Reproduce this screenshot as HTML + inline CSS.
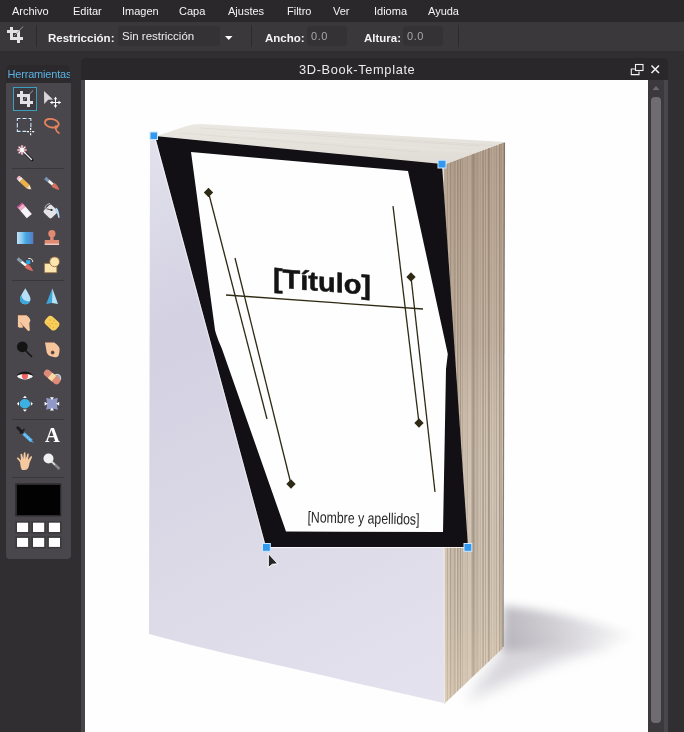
<!DOCTYPE html>
<html><head><meta charset="utf-8">
<style>
*{margin:0;padding:0;box-sizing:border-box}
html,body{width:684px;height:732px;overflow:hidden;background:#302e31;font-family:"Liberation Sans",sans-serif}
.abs{position:absolute;will-change:transform}
#menu{left:0;top:0;width:684px;height:22px;background:#2a282b;will-change:transform}
#menu span{position:absolute;top:5px;font-size:11px;color:#f4f4f4}
#tb{left:0;top:22px;width:684px;height:29px;background:#3a383b}
.lbl{position:absolute;font-size:11.5px;font-weight:bold;color:#f4f4f4}
.inp{position:absolute;background:#343235;border-radius:3px}
.val{position:absolute;font-size:11px;letter-spacing:0.6px;color:#a8a8a8}
.div{position:absolute;width:1px;background:#2c2a2d}
#panel{left:6px;top:83px;width:65px;height:476px;background:#49474b;border-radius:0 0 4px 4px}
#pgap{left:6px;top:78px;width:65px;height:5px;background:#2c2a2d}
#phead{left:6px;top:65px;width:64px;height:14px;background:#2b292c;border-radius:5px 5px 0 0;overflow:hidden}
#win{left:81px;top:58px;width:587px;height:674px;background:#29272a;border-radius:5px 5px 0 0}
#canvas{left:85px;top:80px;width:563px;height:652px;background:#fefefe;overflow:hidden}
#sb{left:648px;top:80px;width:16px;height:652px;background:#3b393c}
#sb2{left:664px;top:80px;width:4px;height:652px;background:#48464a}
#leftstrip{left:81px;top:80px;width:4px;height:652px;background:#48464a}
</style></head><body>
<div id="menu" class="abs">
<span style="left:12px">Archivo</span>
<span style="left:73px">Editar</span>
<span style="left:122px">Imagen</span>
<span style="left:179px">Capa</span>
<span style="left:228px">Ajustes</span>
<span style="left:287px">Filtro</span>
<span style="left:333px">Ver</span>
<span style="left:374px">Idioma</span>
<span style="left:428px">Ayuda</span>
</div>
<div id="tb" class="abs">
<div class="div" style="left:36px;top:3px;height:22px"></div>
<span class="lbl" style="left:48px;top:10px">Restricción:</span>
<div class="inp" style="left:118px;top:4px;width:102px;height:20px"></div>
<span class="val" style="left:122px;top:8px;color:#eeeeee;font-size:11.5px;letter-spacing:0">Sin restricción</span>
<div class="div" style="left:251px;top:3px;height:22px"></div>
<span class="lbl" style="left:265px;top:10px">Ancho:</span>
<div class="inp" style="left:307px;top:4px;width:40px;height:20px"></div>
<span class="val" style="left:311px;top:8px">0.0</span>
<span class="lbl" style="left:364px;top:10px">Altura:</span>
<div class="inp" style="left:403px;top:4px;width:40px;height:20px"></div>
<span class="val" style="left:407px;top:8px">0.0</span>
<div class="div" style="left:458px;top:3px;height:22px"></div>
<svg class="abs" style="left:0;top:0" width="260" height="28" viewBox="0 22 260 28">
<g fill="#e2e1e4">
<rect x="10" y="27" width="3" height="13"/>
<rect x="7" y="30" width="13" height="3"/>
<rect x="17" y="30" width="3" height="13"/>
<rect x="10" y="37" width="13" height="3"/>
</g>
<line x1="14" y1="36" x2="23" y2="26.6" stroke="#9a999c" stroke-width="1"/>
<path d="M225 36 L232.5 36 L228.75 40 Z" fill="#ffffff"/>
</svg>
</div>
<div id="pgap" class="abs"></div>
<div id="panel" class="abs"></div>
<svg class="abs" style="left:6px;top:82px" width="65" height="476" viewBox="6 82 65 476">
<g stroke="#39373a" stroke-width="1">
<line x1="12" y1="168.5" x2="64" y2="168.5"/>
<line x1="12" y1="280.5" x2="64" y2="280.5"/>
<line x1="12" y1="419.5" x2="64" y2="419.5"/>
<line x1="12" y1="477.5" x2="64" y2="477.5"/>
</g>
<!-- crop selected -->
<rect x="13.5" y="87.5" width="23" height="23" fill="#3d3b3f" stroke="#3c9ec0" stroke-width="1"/>
<line x1="23.5" y1="100" x2="33" y2="90.6" stroke="#a6a5a8" stroke-width="1"/>
<g fill="#e2e1e4">
<rect x="20" y="91" width="3" height="13"/>
<rect x="17" y="94" width="13" height="3"/>
<rect x="27" y="94" width="3" height="13"/>
<rect x="20" y="101" width="13" height="3"/>
</g>
<!-- move -->
<path d="M44 91 L53 99.4 L48.2 99.7 L44.2 104 Z" fill="#d8d6da"/>
<g fill="#ffffff">
<rect x="55" y="97.5" width="1" height="10"/>
<rect x="50.5" y="102" width="10" height="1"/>
<path d="M55.5 96.8 L57.3 99.3 L53.7 99.3 Z"/>
<path d="M55.5 107.8 L57.3 105.3 L53.7 105.3 Z"/>
<path d="M50 102.5 L52.5 100.7 L52.5 104.3 Z"/>
<path d="M61 102.5 L58.5 100.7 L58.5 104.3 Z"/>
</g>
<!-- marquee -->
<g stroke="#1c3850" stroke-width="2.2" fill="none" opacity="0.5">
<path d="M17.3 121 V118.5 H20.5 M22.5 118.5 H26.5 M28.5 118.5 H30.9 V121 M17.3 123 V127.5 M30.9 123 V127.2 M17.3 129.3 V131.4 H20.5 M22.5 131.4 H26.3"/>
</g>
<g stroke="#dceaf8" stroke-width="1.1" fill="none">
<path d="M17.3 121 V118.5 H20.5 M22.5 118.5 H26.5 M28.5 118.5 H30.9 V121 M17.3 123 V127.5 M30.9 123 V127.2 M17.3 129.3 V131.4 H20.5 M22.5 131.4 H26.3"/>
</g>
<g stroke="#ffffff" stroke-width="1.2">
<path d="M27 131.6 H29 M32.2 131.6 H34.2 M30.6 128 V130 M30.6 133.2 V135.2"/>
</g>
<rect x="30.1" y="131.1" width="1" height="1" fill="#fff"/>
<!-- lasso -->
<ellipse cx="51.8" cy="123.2" rx="7" ry="4.2" transform="rotate(12 51.8 123.2)" fill="none" stroke="#e4825e" stroke-width="1.9"/>
<path d="M54.5 127.3 C56 129 58 127.5 56.5 126.2 C54.5 125 54.5 130.5 59.5 133.5" fill="none" stroke="#e4825e" stroke-width="1.6"/>
<!-- wand -->
<line x1="23" y1="151" x2="32" y2="160" stroke="#111" stroke-width="2.8" stroke-linecap="round"/>
<line x1="23" y1="151" x2="31.5" y2="159.5" stroke="#e8e8e8" stroke-width="1.4" stroke-linecap="round"/>
<circle cx="22" cy="150" r="4.4" fill="#c85878" opacity="0.6"/>
<g stroke="#ffffff" stroke-width="1.2">
<path d="M22 145.2 V154.8 M17.2 150 H26.8 M18.6 146.6 L25.4 153.4 M25.4 146.6 L18.6 153.4"/>
</g>
<circle cx="22" cy="150" r="1.6" fill="#fff"/>
<!-- pencil -->
<g transform="rotate(43 25 183.8)">
<rect x="15" y="181.5" width="3" height="4.6" rx="1.4" fill="#f2b8c8"/>
<rect x="17.6" y="181.5" width="2.2" height="4.6" fill="#f4f4f4"/>
<rect x="19.8" y="181.5" width="9.2" height="4.6" fill="#eab04a"/>
<path d="M29 181.5 L34.2 183.8 L29 186.1 Z" fill="#f6e2c0"/>
<path d="M32.6 183.1 L34.4 183.8 L32.6 184.5 Z" fill="#2a2a2a"/>
</g>
<!-- brush -->
<g transform="rotate(40 52.3 184)">
<rect x="43" y="182.4" width="4.5" height="3.2" fill="#7b95b0"/>
<rect x="47.5" y="182.6" width="5.5" height="2.8" fill="#f4f4f4"/>
<path d="M53 181.8 C56 181.4 59.5 182.8 61.5 184 C59.5 185.2 56 186.6 53 186.2 Z" fill="#d8705e"/>
</g>
<!-- eraser -->
<g transform="rotate(50 24.5 210.5)">
<rect x="17" y="207.2" width="5" height="6.6" fill="#f2acc4"/>
<rect x="17" y="207.2" width="1.5" height="6.6" fill="#c84a98"/>
<rect x="22" y="207.2" width="10" height="6.6" fill="#f6f4f6"/>
</g>
<!-- bucket -->
<rect x="45" y="206" width="11" height="11" rx="2" transform="rotate(45 50.5 211.5)" fill="#e4e3e6"/>
<path d="M45 208.5 Q45 204.5 50 203.5" fill="none" stroke="#bdbcc0" stroke-width="1"/>
<path d="M46.5 208.8 L51.5 210" stroke="#3a3a3a" stroke-width="0.8"/>
<circle cx="51.6" cy="210" r="1.1" fill="#2a2a2a"/>
<path d="M55.8 207.5 C58 208.5 59 211 59.7 217.8 L58.2 217.8 C57.5 214 57 212 55.2 211.5 Z" fill="#b0dcf8"/>
<!-- gradient -->
<defs>
<linearGradient id="grd" x1="0" x2="1" y1="0" y2="0">
<stop offset="0" stop-color="#bde3fa"/><stop offset="0.3" stop-color="#8cc8f0"/><stop offset="0.55" stop-color="#40a8e0"/><stop offset="0.7" stop-color="#4a9ad8"/><stop offset="1" stop-color="#5a78c4"/>
</linearGradient>
</defs>
<rect x="17" y="232" width="16.3" height="12" fill="url(#grd)"/>
<!-- stamp -->
<g fill="#e08a72">
<circle cx="51.9" cy="233.7" r="3.6"/>
<rect x="50.2" y="235" width="3.4" height="5.5"/>
<rect x="44.7" y="240" width="14.4" height="4.2"/>
</g>
<rect x="44.7" y="243.6" width="14.4" height="1.4" fill="#f2c8c0"/>
<!-- color replace brush -->
<g transform="rotate(39 25.5 265)">
<rect x="15.3" y="263.4" width="5" height="3.2" fill="#8a9aac"/>
<rect x="20.3" y="263.6" width="6" height="2.8" fill="#f4f4f4"/>
<path d="M26.3 262.7 C30 262.3 33.5 263.8 35.5 265 C33.5 266.2 30 267.7 26.3 267.3 Z" fill="#d86a60"/>
</g>
<rect x="26.1" y="260.2" width="4.2" height="3.8" fill="#30a8e8"/>
<path d="M28.3 258.5 Q32.5 258 32.8 262" fill="none" stroke="#fff" stroke-width="0.9"/>
<!-- shape -->
<rect x="44.3" y="263.3" width="12.6" height="9.5" fill="#fde6ae" stroke="#8a6444" stroke-width="0.8"/>
<circle cx="54.6" cy="261.8" r="4.9" fill="#fde6ae" stroke="#8a6444" stroke-width="0.8"/>
<!-- drop -->
<path d="M25.3 288.2 C23 292 20 296.5 20 299 A5.2 5.2 0 0 0 30.5 299 C30.5 296.5 27.6 292 25.3 288.2 Z" fill="#b6e0f8"/>
<path d="M21.4 295 C20.3 297 20 298 20 299 A5.2 5.2 0 0 0 30 301 C26 302 22 300 21.4 295 Z" fill="#3aa6dc"/>
<!-- sharpen -->
<path d="M52.3 288.2 L46.2 304 L52 303 Z" fill="#3ea6d8"/>
<path d="M52.3 288.2 L58 304 L52 303 Z" fill="#b4e2f8"/>
<!-- smudge hand -->
<path d="M17.9 314.9 L25.9 314.9 C28 316 30.4 318.5 30.4 320.4 L29.3 323.3 L29.8 330.6 C29 331.4 28 331 27.2 330 L22.8 325.2 L22.8 327.8 C21 328 19.5 327.4 17.9 326.9 Z" fill="#f6c7a0"/>
<path d="M17.9 314.9 H25.9" stroke="#6a4030" stroke-width="0.7"/>
<path d="M20.5 322.5 L23.5 327" stroke="#b08060" stroke-width="0.8"/>
<!-- sponge -->
<rect x="44.8" y="318" width="14.4" height="10.5" rx="3.8" transform="rotate(42 52 323.2)" fill="#f8cf5a"/>
<g fill="#e8a030">
<circle cx="50" cy="320" r="0.7"/><circle cx="54" cy="321" r="0.7"/><circle cx="48" cy="323.5" r="0.7"/><circle cx="52" cy="323.5" r="0.7"/><circle cx="56" cy="324" r="0.7"/><circle cx="50" cy="326" r="0.7"/><circle cx="53.5" cy="327.5" r="0.7"/>
</g>
<!-- burn -->
<circle cx="22.3" cy="346.8" r="5.4" fill="#141414"/>
<line x1="25.5" y1="350.5" x2="32" y2="357" stroke="#141414" stroke-width="1.6"/>
<!-- dodge hand -->
<path d="M44.9 342.2 L53.9 342.2 C56.5 344 59.6 346.5 59.6 349 C59.6 352 59 354.5 58.4 356 C57.5 357 56 357.5 54.8 357.3 C52 356.8 49.5 356 48.4 355 C47.2 353.5 46.6 352 46.5 350.9 C46 348 45.5 345 44.9 342.2 Z" fill="#f5c59e"/>
<path d="M44.9 342.2 H53.9" stroke="#7a5040" stroke-width="0.6"/>
<circle cx="52.6" cy="352.5" r="1.9" fill="#8a5a40"/>
<circle cx="52.8" cy="352.7" r="1.1" fill="#3a3a44"/>
<!-- red eye -->
<path d="M17 376.3 C20 372.5 29.5 372.5 33 376.3 C29.5 380.5 20 380.5 17 376.3 Z" fill="#f4f4f4"/>
<circle cx="24.9" cy="376" r="3.1" fill="#f06262"/>
<path d="M17.5 375 C21 371 29 371 32.5 375 C29 373.2 21 373.2 17.5 375 Z" fill="#111" stroke="#111" stroke-width="0.6"/>
<!-- bandage -->
<circle cx="57" cy="378" r="3.8" fill="#a8a8aa" stroke="#eee" stroke-width="0.8"/>
<g transform="rotate(40 52 377)">
<rect x="42.5" y="373.5" width="19" height="7" rx="3.5" fill="#e08a7a"/>
<rect x="49.5" y="373.5" width="5" height="7" fill="#f8daa4"/>
</g>
<!-- bloat -->
<ellipse cx="24.9" cy="403.8" rx="5.3" ry="4.7" fill="#3cb0e2"/>
<g fill="#fff">
<path d="M24.9 395.8 L26.9 398 L22.9 398 Z"/><path d="M24.9 411.8 L26.9 409.6 L22.9 409.6 Z"/>
<path d="M16.9 403.8 L19 401.8 L19 405.8 Z"/><path d="M32.9 403.8 L30.8 401.8 L30.8 405.8 Z"/>
</g>
<!-- pinch -->
<path d="M46 397.8 Q52 400 58 397.8 Q56 403.8 58 409.8 Q52 407.6 46 409.8 Q48 403.8 46 397.8 Z" fill="#9199c9"/>
<g fill="#fff">
<path d="M51.9 400 L53.9 397.2 L49.9 397.2 Z"/><path d="M51.9 407.6 L53.9 410.4 L49.9 410.4 Z"/>
<path d="M47.6 403.8 L44.6 401.8 L44.6 405.8 Z"/><path d="M56.2 403.8 L59.2 401.8 L59.2 405.8 Z"/>
</g>
<!-- dropper -->
<line x1="17.8" y1="427.8" x2="22" y2="432" stroke="#1c1c1c" stroke-width="3" stroke-linecap="round"/>
<line x1="20" y1="433.5" x2="24.5" y2="429" stroke="#1c1c1c" stroke-width="1.6"/>
<line x1="23.5" y1="433.5" x2="31.5" y2="441" stroke="#58b4f0" stroke-width="3.4"/>
<path d="M31 439 L33.8 443 L29.6 440.8 Z" fill="#58b4f0"/>
<g fill="#b8e4ff"><circle cx="25" cy="435" r="0.6"/><circle cx="27.3" cy="437.2" r="0.6"/><circle cx="29.6" cy="439.3" r="0.6"/></g>
<!-- A -->
<text x="52.5" y="442.2" text-anchor="middle" font-family="Liberation Serif" font-weight="bold" font-size="20.5" fill="#ffffff">A</text>
<!-- hand -->
<path d="M20 462 L17 458.5 C16.5 457.5 17.8 457 18.5 457.8 L21 460.5 L20.5 454.5 C20.5 453.5 22 453.5 22.2 454.5 L23.2 459 L23.8 453 C24 452 25.5 452 25.5 453 L25.8 459 L27.3 454 C27.6 453 29 453.3 28.8 454.3 L28 460 L30.6 456.5 C31.2 455.8 32.5 456.3 32 457.2 L29.5 463 C29 467 28 470 25 470 L22 470 C20.5 468 20.5 465 20 462 Z" fill="#f5c9a0"/>
<!-- zoom -->
<line x1="51.5" y1="461.5" x2="59.5" y2="469" stroke="#8a8a8c" stroke-width="2.4"/>
<line x1="51.5" y1="461.5" x2="55" y2="464.8" stroke="#e8e8ea" stroke-width="1.2"/>
<circle cx="48.5" cy="458.5" r="5" fill="#f0eff2"/>
<!-- color box -->
<rect x="15.2" y="483.3" width="46.1" height="33.1" fill="#2c2a2d"/>
<rect x="17" y="485" width="43" height="30" fill="#030203"/>
<!-- grid -->
<rect x="15.4" y="521.1" width="14.3" height="12.5" fill="#3b393d"/>
<rect x="31.4" y="521.1" width="14.4" height="12.5" fill="#3b393d"/>
<rect x="47.3" y="521.1" width="14.3" height="12.5" fill="#3b393d"/>
<rect x="15.4" y="536.3" width="14.3" height="12.2" fill="#3b393d"/>
<rect x="31.4" y="536.3" width="14.4" height="12.2" fill="#3b393d"/>
<rect x="47.3" y="536.3" width="14.3" height="12.2" fill="#3b393d"/>
<rect x="17" y="522.7" width="11.1" height="9.3" fill="#ffffff"/>
<rect x="33" y="522.7" width="11.2" height="9.3" fill="#ffffff"/>
<rect x="48.9" y="522.7" width="11.1" height="9.3" fill="#ffffff"/>
<rect x="17" y="537.9" width="11.1" height="9.0" fill="#ffffff"/>
<rect x="33" y="537.9" width="11.2" height="9.0" fill="#ffffff"/>
<rect x="48.9" y="537.9" width="11.1" height="9.0" fill="#ffffff"/>
</svg>
<div id="phead" class="abs"><span style="position:absolute;left:1.5px;top:3px;font-size:11px;letter-spacing:-0.18px;color:#5cb0e2;white-space:nowrap">Herramientas</span></div>
<div id="win" class="abs"></div>
<div class="abs" style="left:299px;top:62px;font-size:12.8px;letter-spacing:0.65px;color:#ececec">3D-Book-Template</div>
<div id="leftstrip" class="abs"></div>
<div id="canvas" class="abs"><svg class="abs" style="left:0;top:0" width="563" height="652" viewBox="85 80 563 652">
<defs>
<linearGradient id="pg" x1="443" y1="0" x2="505" y2="0" gradientUnits="userSpaceOnUse"><stop offset="0.000" stop-color="#ccbeae"/><stop offset="0.011" stop-color="#d4c6b6"/><stop offset="0.022" stop-color="#d4c6b6"/><stop offset="0.033" stop-color="#d4c6b6"/><stop offset="0.044" stop-color="#d4c6b6"/><stop offset="0.056" stop-color="#d4c6b6"/><stop offset="0.067" stop-color="#a49686"/><stop offset="0.078" stop-color="#ccbeae"/><stop offset="0.089" stop-color="#d4c6b6"/><stop offset="0.100" stop-color="#ccbeae"/><stop offset="0.111" stop-color="#d4c6b6"/><stop offset="0.122" stop-color="#a49686"/><stop offset="0.133" stop-color="#ccbeae"/><stop offset="0.144" stop-color="#b8aa9a"/><stop offset="0.156" stop-color="#ccbeae"/><stop offset="0.167" stop-color="#ccbeae"/><stop offset="0.178" stop-color="#a49686"/><stop offset="0.189" stop-color="#b8aa9a"/><stop offset="0.200" stop-color="#b8aa9a"/><stop offset="0.211" stop-color="#d4c6b6"/><stop offset="0.222" stop-color="#d4c6b6"/><stop offset="0.233" stop-color="#a49686"/><stop offset="0.244" stop-color="#d4c6b6"/><stop offset="0.256" stop-color="#a49686"/><stop offset="0.267" stop-color="#ccbeae"/><stop offset="0.278" stop-color="#a49686"/><stop offset="0.289" stop-color="#a49686"/><stop offset="0.300" stop-color="#d4c6b6"/><stop offset="0.311" stop-color="#b8aa9a"/><stop offset="0.322" stop-color="#b8aa9a"/><stop offset="0.333" stop-color="#d4c6b6"/><stop offset="0.344" stop-color="#d4c6b6"/><stop offset="0.356" stop-color="#b8aa9a"/><stop offset="0.367" stop-color="#d4c6b6"/><stop offset="0.378" stop-color="#ccbeae"/><stop offset="0.389" stop-color="#ccbeae"/><stop offset="0.400" stop-color="#b8aa9a"/><stop offset="0.411" stop-color="#d4c6b6"/><stop offset="0.422" stop-color="#ccbeae"/><stop offset="0.433" stop-color="#d4c6b6"/><stop offset="0.444" stop-color="#d4c6b6"/><stop offset="0.456" stop-color="#b8aa9a"/><stop offset="0.467" stop-color="#ccbeae"/><stop offset="0.478" stop-color="#a49686"/><stop offset="0.489" stop-color="#a49686"/><stop offset="0.500" stop-color="#a49686"/><stop offset="0.511" stop-color="#b8aa9a"/><stop offset="0.522" stop-color="#ccbeae"/><stop offset="0.533" stop-color="#a49686"/><stop offset="0.544" stop-color="#ccbeae"/><stop offset="0.556" stop-color="#b8aa9a"/><stop offset="0.567" stop-color="#b8aa9a"/><stop offset="0.578" stop-color="#d4c6b6"/><stop offset="0.589" stop-color="#ccbeae"/><stop offset="0.600" stop-color="#b8aa9a"/><stop offset="0.611" stop-color="#ccbeae"/><stop offset="0.622" stop-color="#d4c6b6"/><stop offset="0.633" stop-color="#a49686"/><stop offset="0.644" stop-color="#d4c6b6"/><stop offset="0.656" stop-color="#a49686"/><stop offset="0.667" stop-color="#d4c6b6"/><stop offset="0.678" stop-color="#d4c6b6"/><stop offset="0.689" stop-color="#a49686"/><stop offset="0.700" stop-color="#d4c6b6"/><stop offset="0.711" stop-color="#ccbeae"/><stop offset="0.722" stop-color="#ccbeae"/><stop offset="0.733" stop-color="#a49686"/><stop offset="0.744" stop-color="#a49686"/><stop offset="0.756" stop-color="#b8aa9a"/><stop offset="0.767" stop-color="#d4c6b6"/><stop offset="0.778" stop-color="#b8aa9a"/><stop offset="0.789" stop-color="#d4c6b6"/><stop offset="0.800" stop-color="#d4c6b6"/><stop offset="0.811" stop-color="#d4c6b6"/><stop offset="0.822" stop-color="#b8aa9a"/><stop offset="0.833" stop-color="#ccbeae"/><stop offset="0.844" stop-color="#ccbeae"/><stop offset="0.856" stop-color="#d4c6b6"/><stop offset="0.867" stop-color="#a49686"/><stop offset="0.878" stop-color="#d4c6b6"/><stop offset="0.889" stop-color="#d4c6b6"/><stop offset="0.900" stop-color="#d4c6b6"/><stop offset="0.911" stop-color="#a49686"/><stop offset="0.922" stop-color="#d4c6b6"/><stop offset="0.933" stop-color="#a49686"/><stop offset="0.944" stop-color="#b8aa9a"/><stop offset="0.956" stop-color="#ccbeae"/><stop offset="0.967" stop-color="#d4c6b6"/><stop offset="0.978" stop-color="#b8aa9a"/><stop offset="0.989" stop-color="#d4c6b6"/><stop offset="1.000" stop-color="#ccbeae"/></linearGradient>
<linearGradient id="cov" x1="150" y1="140" x2="440" y2="700" gradientUnits="userSpaceOnUse">
<stop offset="0" stop-color="#e2e1ec"/><stop offset="0.28" stop-color="#d3d1e2"/><stop offset="0.6" stop-color="#dbd9e6"/><stop offset="1" stop-color="#e4e2ee"/></linearGradient>
<linearGradient id="top" x1="0" y1="124" x2="0" y2="165" gradientUnits="userSpaceOnUse">
<stop offset="0" stop-color="#ebe8e3"/><stop offset="1" stop-color="#dfdbd4"/></linearGradient>
<filter id="blur" x="-50%" y="-50%" width="200%" height="200%"><feGaussianBlur stdDeviation="5"/></filter>
</defs>
<linearGradient id="shg" x1="503" y1="0" x2="640" y2="0" gradientUnits="userSpaceOnUse"><stop offset="0" stop-color="#b4b2b9"/><stop offset="0.35" stop-color="#cac8ce"/><stop offset="1" stop-color="#fcfcfc"/></linearGradient>
<filter id="blur2" x="-50%" y="-50%" width="200%" height="200%"><feGaussianBlur stdDeviation="7"/></filter>
<path d="M503 630 C560 636 600 640 620 642 C580 652 530 670 466 702 L503 648 Z" fill="#d4d2d8" filter="url(#blur2)" opacity="0.9"/>
<path d="M503 606 C560 611 605 624 636 637 C600 642 560 648 503 652 Z" fill="url(#shg)" filter="url(#blur)" opacity="0.9"/>
<path d="M150 136 L442 164 L444 703 L224 653 L187 644 L149 634 Z" fill="url(#cov)"/>
<path d="M443 165 L505 142 L503 648 L444 704 Z" fill="url(#pg)"/>
<linearGradient id="pgv" x1="0" y1="150" x2="0" y2="700" gradientUnits="userSpaceOnUse"><stop offset="0" stop-color="#907460" stop-opacity="0.42"/><stop offset="0.35" stop-color="#9c8470" stop-opacity="0.28"/><stop offset="0.65" stop-color="#c8b8a4" stop-opacity="0"/><stop offset="1" stop-color="#e6d8bc" stop-opacity="0.4"/></linearGradient>
<path d="M443 165 L505 142 L503 648 L444 704 Z" fill="url(#pgv)"/>
<path d="M504.5 143 L503 647" stroke="#6a6058" stroke-width="1.2" opacity="0.7"/>
<path d="M443.5 166 L444.5 703" stroke="#f4f0ea" stroke-width="1" opacity="0.8"/>
<path d="M157 136 L185 126.5 C190 124.8 195 124 202 124 L505 142 L443 165 Z" fill="url(#top)"/>
<g stroke-width="0.8" opacity="0.35">
<path d="M200 128 L480 146" stroke="#c8c2b8"/>
<path d="M230 134 L470 152" stroke="#f4f2ee"/>
<path d="M180 133 L420 152" stroke="#cdc8be"/>
<path d="M260 130 L500 146" stroke="#d0cac0"/>
</g>
<path d="M155 136 L442 164 L468 547 L266 547 Z" fill="#121014"/>
<path d="M266 547.5 L468 547.5" stroke="#ffffff" stroke-width="1" opacity="0.8"/>
<path d="M154.5 137 L265.5 547" stroke="#ffffff" stroke-width="0.9" opacity="0.6"/>
<path d="M191 152 L408 171 L447.8 354 L446 369 L443 532 L286 531.5 L222 349 Q217 338 215 330 Z" fill="#fefefe"/>
<g stroke="#2e2a14" stroke-width="1.3" fill="none">
<path d="M208.5 192.5 L267 419"/>
<path d="M235 258 L291 484"/>
<path d="M393 206 L419 423"/>
<path d="M411 277 L435 492"/>
<path d="M226 295 L423 309"/>
</g>
<g fill="#2e2a14">
<rect x="-3.3" y="-3.3" width="6.6" height="6.6" transform="translate(208.5 192.5) rotate(45)"/>
<rect x="-3.3" y="-3.3" width="6.6" height="6.6" transform="translate(291 484) rotate(45)"/>
<rect x="-3.3" y="-3.3" width="6.6" height="6.6" transform="translate(419 423) rotate(45)"/>
<rect x="-3.3" y="-3.3" width="6.6" height="6.6" transform="translate(411 277) rotate(45)"/>
</g>
<text x="322" y="291" transform="translate(0 -24.7) skewY(4.4) translate(0 0)" text-anchor="middle" font-family="Liberation Sans" font-weight="bold" font-size="27" fill="#141414" stroke="#141414" stroke-width="0.5" textLength="98" lengthAdjust="spacingAndGlyphs">[Título]</text>
<text x="363.5" y="523.5" transform="rotate(1.2 364 518)" text-anchor="middle" font-family="Liberation Sans" font-size="15.5" fill="#262626" textLength="112" lengthAdjust="spacingAndGlyphs">[Nombre y apellidos]</text>
<g fill="#3399ee" stroke="#cfe6ff" stroke-width="1">
<rect x="150" y="132" width="7.5" height="7.5"/>
<rect x="438" y="160.2" width="8" height="7.8"/>
<rect x="262.5" y="543.5" width="7.8" height="7.8"/>
<rect x="464" y="543.5" width="7.8" height="7.8"/>
</g>
<path d="M268.3 553.5 L268.3 567.6 L272.3 564.3 L277.8 563.8 Z" fill="#262626" stroke="#ffffff" stroke-width="1"/>
</svg></div>
<div id="sb" class="abs"></div>
<div id="sb2" class="abs"></div>
<svg class="abs" style="left:620px;top:58px" width="64" height="40" viewBox="620 58 64 40">
<g fill="none" stroke="#f4f4f4" stroke-width="1.1">
<rect x="635.5" y="64.5" width="7.5" height="6"/>
<path d="M635 69 H631.3 V74.6 H639 V71.5"/>
<path d="M651.5 65.5 L659 73 M659 65.5 L651.5 73" stroke-width="1.5"/>
</g>
<path d="M652.5 90 L656 86 L659.5 90 Z" fill="#6c6a6e"/>
</svg>
<div class="abs" style="left:651px;top:97px;width:10px;height:626px;background:#6e6c70;border-radius:4px"></div>
</body></html>
